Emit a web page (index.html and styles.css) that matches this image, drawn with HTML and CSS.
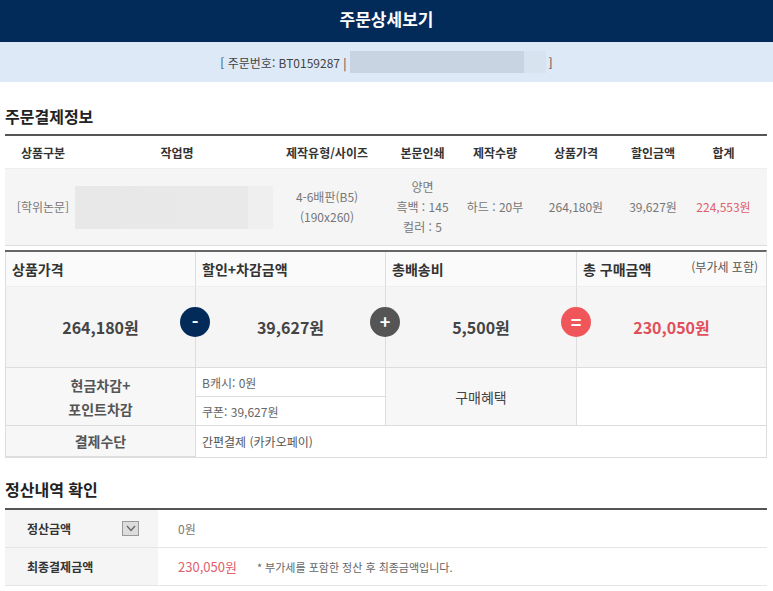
FILE: index.html
```html
<!DOCTYPE html>
<html lang="ko">
<head>
    <meta charset="UTF-8">
    <meta name="viewport" content="width=device-width, initial-scale=1.0">
    <title>주문상세보기</title>
    <link rel="stylesheet" href="styles.css">
</head>
<body>

<header class="top-bar">
    <h1>주문상세보기</h1>
</header>

<div class="order-no">
    [ 주문번호: BT0159287 | <span class="blur-box"></span> ]
</div>

<div class="content">
    <h2 class="section-title">주문결제정보</h2>

    <!-- 주문 상품 목록 -->
    <table class="order-table">
        <colgroup>
            <col style="width:76px">
            <col style="width:192px">
            <col style="width:108px">
            <col style="width:83px">
            <col style="width:62px">
            <col style="width:100px">
            <col style="width:54px">
            <col>
        </colgroup>
        <thead>
            <tr>
                <th>상품구분</th>
                <th>작업명</th>
                <th>제작유형/사이즈</th>
                <th>본문인쇄</th>
                <th>제작수량</th>
                <th>상품가격</th>
                <th>할인금액</th>
                <th>합계</th>
            </tr>
        </thead>
        <tbody>
            <tr>
                <td>[학위논문]</td>
                <td><div class="name-blur"></div></td>
                <td>4-6배판(B5)<br>(190x260)</td>
                <td>양면<br>흑백 : 145<br>컬러 : 5</td>
                <td>하드 : 20부</td>
                <td>264,180원</td>
                <td>39,627원</td>
                <td class="red">224,553원</td>
            </tr>
        </tbody>
    </table>

    <!-- 결제 요약 -->
    <div class="summary">
        <div class="s-head">상품가격</div>
        <div class="s-head">할인+차감금액</div>
        <div class="s-head">총배송비</div>
        <div class="s-head">총 구매금액 <span class="vat">(부가세 포함)</span></div>

        <div class="s-value">264,180원</div>
        <div class="s-value">
            <span class="op op-minus">-</span>
            39,627원
        </div>
        <div class="s-value">
            <span class="op op-plus">+</span>
            5,500원
        </div>
        <div class="s-value total">
            <span class="op op-equal">=</span>
            230,050원
        </div>

        <div class="s-label deduct">현금차감+<br>포인트차감</div>
        <div class="s-sub">B캐시: 0원</div>
        <div class="s-label benefit">구매혜택</div>
        <div class="s-empty"></div>
        <div class="s-sub">쿠폰: 39,627원</div>

        <div class="s-label">결제수단</div>
        <div class="s-pay">간편결제 (카카오페이)</div>
    </div>

    <h2 class="section-title second">정산내역 확인</h2>

    <div class="settle">
        <div class="settle-row">
            <div class="settle-label">
                정산금액
                <span class="drop"><svg width="10" height="7" viewBox="0 0 10 7"><path d="M1 1 L5 5.5 L9 1" fill="none" stroke="#666" stroke-width="1.3"/></svg></span>
            </div>
            <div class="settle-val">0원</div>
        </div>
        <div class="settle-row">
            <div class="settle-label">최종결제금액</div>
            <div class="settle-val">
                <span class="red">230,050원</span>
                <span class="note">* 부가세를 포함한 정산 후 최종금액입니다.</span>
            </div>
        </div>
    </div>
</div>

</body>
</html>
```

FILE: styles.css
```css
body {
    font-family: "Noto Sans CJK KR", "Noto Sans", sans-serif;
    margin: 0;
    padding: 0;
    background-color: white;
    color: #333;
}

.top-bar {
    background-color: #022b5a;
    height: 42px;
    display: flex;
    align-items: center;
    justify-content: center;
}

.top-bar h1 {
    margin: 0;
    font-size: 17px;
    font-weight: bold;
    color: white;
    position: relative;
    top: -3px;
}

.order-no {
    background-color: #dde9f7;
    height: 40px;
    display: flex;
    align-items: center;
    justify-content: center;
    font-size: 12px;
    color: #444;
    gap: 3px;
}

.blur-box {
    display: inline-block;
    width: 196px;
    height: 22px;
    background: linear-gradient(to right, #c8d4e2 0, #c8d4e2 174px, #d8e3f0 174px);
}

.content {
    padding: 0 6px 0 5px;
}

.section-title {
    margin: 0;
    padding: 22px 0 6px;
    font-size: 16px;
    font-weight: bold;
    color: #222;
    border-bottom: 2px solid #555;
}

.section-title.second {
    padding-top: 19px;
    padding-bottom: 7px;
}

/* 주문 상품 테이블 */
.order-table {
    width: 100%;
    border-collapse: collapse;
    table-layout: fixed;
}

.order-table th {
    height: 32px;
    font-size: 12px;
    font-weight: bold;
    color: #333;
    text-align: center;
    padding: 0;
    border-bottom: 1px solid #eee;
}

.order-table td {
    height: 76px;
    background-color: #f5f5f5;
    font-size: 12px;
    color: #777;
    text-align: center;
    line-height: 20px;
    padding: 0;
    border-bottom: 1px solid #ddd;
}

.order-table td.red {
    color: #e0606b;
}

.name-blur {
    height: 43px;
    margin: 0 -5px 0 -6px;
    background: linear-gradient(to right, #e8e8e8 0, #e9e9e9 173px, #efefef 173px);
}

/* 결제 요약 */
.summary {
    margin-top: 4px;
    display: grid;
    grid-template-columns: 190px 190px 191px 1fr;
    grid-template-rows: 35px 81px 29px 29px 31px;
    border-top: 2px solid #666;
    border-right: 1px solid #ddd;
    border-bottom: 1px solid #ddd;
}

.summary > div {
    border-left: 1px solid #ddd;
    box-sizing: border-box;
}

.s-head {
    display: flex;
    align-items: center;
    padding-left: 6px;
    font-size: 14px;
    font-weight: bold;
    color: #333;
    background-color: #fafafa;
    border-bottom: 1px solid #eee;
}

.s-head .vat {
    margin-left: auto;
    padding-right: 8px;
    font-size: 12px;
    font-weight: normal;
    color: #555;
    position: relative;
    top: -3px;
}

.s-value {
    position: relative;
    display: flex;
    align-items: center;
    justify-content: center;
    font-size: 16px;
    font-weight: bold;
    color: #444;
    background-color: #f5f5f5;
    border-bottom: 1px solid #ddd;
}

.s-value.total {
    color: #e0505a;
}

.op {
    position: absolute;
    left: -16px;
    top: 20px;
    width: 30px;
    height: 30px;
    border-radius: 50%;
    color: white;
    font-size: 18px;
    font-weight: bold;
    line-height: 28px;
    text-align: center;
    z-index: 2;
}

.op-minus {
    background-color: #022b5a;
}

.op-plus {
    background-color: #555;
}

.op-equal {
    background-color: #f0555a;
}

.s-label {
    display: flex;
    align-items: center;
    justify-content: center;
    text-align: center;
    font-size: 14px;
    font-weight: bold;
    color: #555;
    line-height: 24px;
    background-color: #f7f7f7;
    border-bottom: 1px solid #ddd;
}

.deduct {
    grid-column: 1;
    grid-row: 3 / 5;
}

.benefit {
    grid-column: 3;
    grid-row: 3 / 5;
    font-weight: normal;
    color: #444;
}

.s-empty {
    grid-column: 4;
    grid-row: 3 / 5;
    border-bottom: 1px solid #ddd;
}

.s-sub {
    grid-column: 2;
    display: flex;
    align-items: center;
    padding-left: 6px;
    font-size: 12px;
    color: #666;
    border-bottom: 1px solid #ddd;
}

.s-pay {
    grid-column: 2 / 5;
    display: flex;
    align-items: center;
    padding-left: 6px;
    font-size: 12px;
    color: #555;
}

/* 정산내역 */
.settle-row {
    display: flex;
    height: 37px;
    border-bottom: 1px solid #e5e5e5;
}

.settle-label {
    width: 153px;
    background-color: #f5f5f5;
    display: flex;
    align-items: center;
    padding-left: 22px;
    box-sizing: border-box;
    font-size: 12px;
    font-weight: bold;
    color: #333;
}

.drop {
    display: flex;
    align-items: center;
    justify-content: center;
    width: 15px;
    height: 13px;
    margin-left: 51px;
    background-color: #ddd;
    border: 1px solid #999;
}

.settle-val {
    display: flex;
    align-items: center;
    padding-left: 20px;
    font-size: 12px;
    color: #777;
}

.settle-val .red {
    color: #e0606b;
    font-size: 13px;
}

.note {
    margin-left: 20px;
    font-size: 11px;
    color: #666;
}
```
